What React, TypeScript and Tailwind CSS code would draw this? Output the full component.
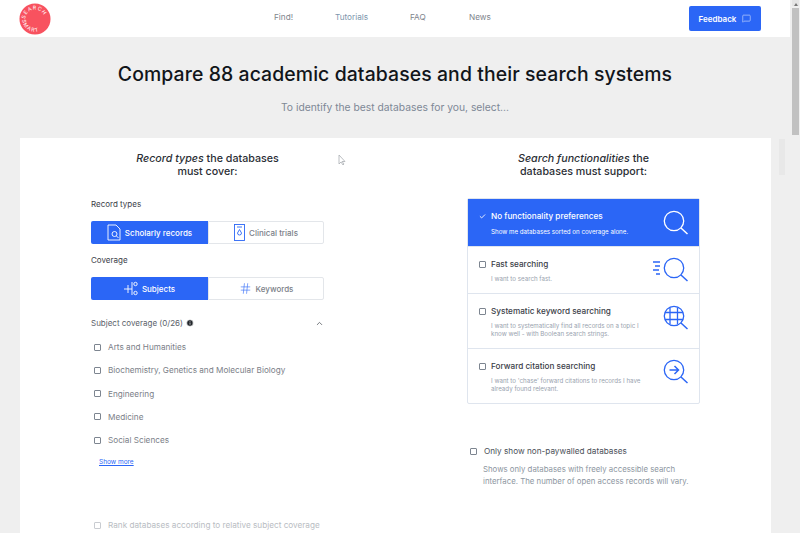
import { Check, ChevronUp, Hash, Info, MessageSquare } from 'lucide-react';

const SUBJECTS = [
  'Arts and Humanities',
  'Biochemistry, Genetics and Molecular Biology',
  'Engineering',
  'Medicine',
  'Social Sciences',
];

function Logo() {
  return (
    <svg width="32" height="32" viewBox="0 0 34 34" className="shrink-0 overflow-visible">
      <circle cx="17" cy="17" r="16.5" fill="#f8525f" />
      <defs>
        <path id="logo-top" d="M6.5 17 A10.5 10.5 0 0 1 27.5 18" />
        <path id="logo-bottom" d="M3.5 18 A13.5 13.5 0 0 0 28.7 23.75" />
      </defs>
      <text fontSize="5.5" fill="#fff" fontFamily="Inter, sans-serif" letterSpacing="1">
        <textPath href="#logo-top">SEARCH</textPath>
      </text>
      <text fontSize="5.5" fill="#fff" fontFamily="Inter, sans-serif" letterSpacing="1.2">
        <textPath href="#logo-bottom">SMART</textPath>
      </text>
    </svg>
  );
}

function Box() {
  return <span className="h-[7px] w-[7px] shrink-0 rounded-[1px] border border-[#7d8590] bg-white" />;
}

// Lupe mit wechselndem Innenleben, wie rechts in den Karten
function Lens({ color, kind }: { color: string; kind: 'plain' | 'fast' | 'grid' | 'arrow' }) {
  return (
    <svg width="28" height="28" viewBox="0 0 28 28" fill="none" stroke={color} strokeWidth="1.3" className="overflow-visible">
      <circle cx="12" cy="10" r="9.7" />
      <path d="M19 17 L25.5 23" strokeWidth="1.5" />
      {kind === 'fast' && <path d="M-9 4h7M-7 8h5M-9 12h6M-6 16h4" />}
      {kind === 'grid' && <path d="M8 1.5v17M15.5 1.5v17M3 6.5h18M3 13.5h18" />}
      {kind === 'arrow' && <path d="M7.5 10h9M12.5 6l4 4-4 4" strokeWidth="1.5" />}
    </svg>
  );
}

function ScholarlyIcon() {
  return (
    <svg width="14" height="17" viewBox="0 0 14 17" fill="none" stroke="#fff" strokeWidth="0.9">
      <path d="M1 1h8l4 4v11H1z" />
      <circle cx="7.5" cy="10" r="2.5" />
      <path d="M9.5 12l2 2" />
    </svg>
  );
}

function TrialIcon() {
  return (
    <svg width="11" height="17" viewBox="0 0 11 17" fill="none" stroke="#2b66f6" strokeWidth="0.9">
      <rect x="0.5" y="0.5" width="10" height="16" />
      <path d="M3 3h5M5.5 5.5l2 3.5a2 2 0 1 1-4 0z" />
    </svg>
  );
}

function SubjectsIcon() {
  return (
    <svg width="14" height="15" viewBox="0 0 14 15" fill="none" stroke="#fff" strokeWidth="0.9">
      <path d="M0 8h8M4 4v8M8 1v13" />
      <circle cx="11.5" cy="3" r="1.7" />
      <circle cx="11.5" cy="12" r="1.7" />
    </svg>
  );
}

function Segmented({ active, other }: { active: React.ReactNode; other: React.ReactNode }) {
  return (
    <div className="flex h-[23px] w-[233px] text-[8px] font-medium">
      <div className="flex w-[117px] items-center justify-center gap-1 rounded-l-[2px] bg-[#2b66f6] text-white">{active}</div>
      <div className="flex flex-1 items-center justify-center gap-1 rounded-r-[2px] border border-[#e3e6ea] bg-white text-[#7b8088]">{other}</div>
    </div>
  );
}

function Functionality({
  title,
  lines,
  kind,
  rowHeight,
  iconTop,
}: {
  title: string;
  lines: string[];
  kind: 'fast' | 'grid' | 'arrow';
  rowHeight: string;
  iconTop: string;
}) {
  return (
    <div className={`flex items-start justify-between border-t border-[#dfe5ee] pr-[9px] pl-[11px] ${rowHeight}`}>
      <div className="pt-[11px]">
        <div className="flex items-center gap-[5px] text-[8.2px] font-medium text-[#3b4048]">
          <Box />
          {title}
        </div>
        <div className="mt-[5px] pl-[12px] text-[6.2px] leading-[8px] text-[#98a2ae]">
          {lines.map((l) => (
            <div key={l}>{l}</div>
          ))}
        </div>
      </div>
      <div className={iconTop}>
        <Lens color="#2b66f6" kind={kind} />
      </div>
    </div>
  );
}

export default function App() {
  return (
    <div className="relative flex h-[533px] w-[800px] overflow-hidden bg-[#efefef] font-['Inter',sans-serif]">
      <div className="flex w-[790px] flex-col">
        <header className="flex h-[37px] shrink-0 items-center bg-white pl-[19px]">
          <Logo />
          <nav className="mb-[3px] ml-[223px] flex gap-[41px] text-[8.2px] text-[#7e848c]">
            <span className="w-[20px]">Find!</span>
            <span className="w-[34px] text-[#7d96ad]">Tutorials</span>
            <span className="w-[18px]">FAQ</span>
            <span>News</span>
          </nav>
          <button className="mr-[29px] ml-auto flex h-[25px] w-[72px] items-center justify-center gap-[6px] rounded-[2px] bg-[#2b66f6] text-[8px] font-semibold text-white">
            Feedback
            <MessageSquare size={9} strokeWidth={1.3} />
          </button>
        </header>

        <h1 className="mt-[23px] text-center text-[19.4px] leading-[28px] font-medium tracking-[0.1px] whitespace-nowrap text-[#11151a]">
          Compare 88 academic databases and their search systems
        </h1>
        <p className="mt-[12px] text-center text-[10.3px] leading-[14px] text-[#7e8896]">To identify the best databases for you, select...</p>

        <main className="mt-[24px] ml-[20px] flex w-[751px] flex-1 bg-white">
          <section className="ml-[71px] w-[233px] pt-[14px]">
            <h2 className="text-center text-[10.7px] leading-[13px] font-medium text-[#2a2e34]">
              <em>Record types</em> the databases
              <br />
              must cover:
            </h2>
            <div className="mt-[21px] text-[8px] leading-[10px] text-[#3b4048]">Record types</div>
            <div className="mt-[12px]">
              <Segmented
                active={
                  <>
                    <ScholarlyIcon />
                    Scholarly records
                  </>
                }
                other={
                  <>
                    <TrialIcon />
                    Clinical trials
                  </>
                }
              />
            </div>
            <div className="mt-[11px] text-[8px] leading-[10px] text-[#3b4048]">Coverage</div>
            <div className="mt-[12px]">
              <Segmented
                active={
                  <>
                    <SubjectsIcon />
                    Subjects
                  </>
                }
                other={
                  <>
                    <Hash size={13} strokeWidth={1.1} color="#2b66f6" />
                    Keywords
                  </>
                }
              />
            </div>
            <div className="mt-[18px] flex items-center text-[8px] leading-[10px] text-[#5c626a]">
              Subject coverage (0/26)
              <Info size={8} className="ml-[3px] fill-[#22262b] text-white" />
              <ChevronUp size={9} className="ml-auto text-[#4a4f56]" />
            </div>
            <ul className="mt-[14px] flex flex-col gap-[13.3px] pl-[3px] text-[8.2px] leading-[10px] text-[#7b8088]">
              {SUBJECTS.map((s) => (
                <li key={s} className="flex items-center gap-[7px] whitespace-nowrap">
                  <Box />
                  {s}
                </li>
              ))}
            </ul>
            <a className="mt-[13px] ml-[8px] block text-[6.5px] leading-[8px] text-[#2b66f6] underline">Show more</a>
            <div className="mt-[54px] flex items-center gap-[7px] pl-[3px] text-[8.2px] leading-[10px] whitespace-nowrap text-[#b9bdc3]">
              <span className="h-[7px] w-[7px] shrink-0 rounded-[1px] border border-[#c9ccd1]" />
              Rank databases according to relative subject coverage
            </div>
          </section>

          <section className="ml-[143px] w-[233px] pt-[14px]">
            <h2 className="text-center text-[10.7px] leading-[13px] font-medium text-[#2a2e34]">
              <em>Search functionalities</em> the
              <br />
              databases must support:
            </h2>
            <div className="mt-[20px] rounded-[2px] border border-[#dfe5ee]">
              <div className="flex h-[47px] items-start justify-between bg-[#2b66f6] pr-[9px] pl-[11px] text-white">
                <div className="pt-[11px]">
                  <div className="flex items-center gap-[5px] text-[8.2px] font-medium">
                    <Check size={7} strokeWidth={3} />
                    No functionality preferences
                  </div>
                  <div className="mt-[6px] pl-[12px] text-[6.2px] leading-[8px]">Show me databases sorted on coverage alone.</div>
                </div>
                <div className="mt-[12px]">
                  <Lens color="#fff" kind="plain" />
                </div>
              </div>
              <Functionality title="Fast searching" kind="fast" lines={['I want to search fast.']} rowHeight="h-[47px]" iconTop="mt-[11px]" />
              <Functionality
                title="Systematic keyword searching"
                kind="grid"
                lines={['I want to systematically find all records on a topic I', 'know well - with Boolean search strings.']}
                rowHeight="h-[55px]"
                iconTop="mt-[12px]"
              />
              <Functionality
                title="Forward citation searching"
                kind="arrow"
                lines={["I want to 'chase' forward citations to records I have", 'already found relevant.']}
                rowHeight="h-[55px]"
                iconTop="mt-[11px]"
              />
            </div>
            <div className="mt-[42px] flex items-center gap-[7px] pl-[3px] text-[8.2px] leading-[10px] text-[#4b5058]">
              <Box />
              Only show non-paywalled databases
            </div>
            <p className="mt-[7px] w-[225px] pl-[16px] text-[7.8px] leading-[12px] whitespace-nowrap text-[#8d96a1]">
              Shows only databases with freely accessible search
              <br />
              interface. The number of open access records will vary.
            </p>
          </section>
        </main>
      </div>

      <div className="w-[10px] pl-[2px]">
        <div className="flex h-[6px] w-[7px] items-end justify-center bg-[#e4e4e4]">
          <span className="h-0 w-0 border-x-[2px] border-b-[3px] border-x-transparent border-b-[#777]" />
        </div>
        <div className="mt-[2px] h-[127px] w-[7px] bg-[#c1c1c1]" />
      </div>

      {/* Mauszeiger und die hellen Störflecken rechts neben der Karte */}
      <svg width="8" height="12" viewBox="0 0 8 12" className="absolute top-[154px] left-[338px]">
        <path d="M1 1v9l2-2 2 3 1-1-2-2.5h3z" fill="#fff" stroke="#a9adb2" strokeWidth="0.8" />
      </svg>
      <div className="absolute top-[139px] left-[779px] h-[36px] w-[6px] bg-[#e8e8e8]" />
    </div>
  );
}
